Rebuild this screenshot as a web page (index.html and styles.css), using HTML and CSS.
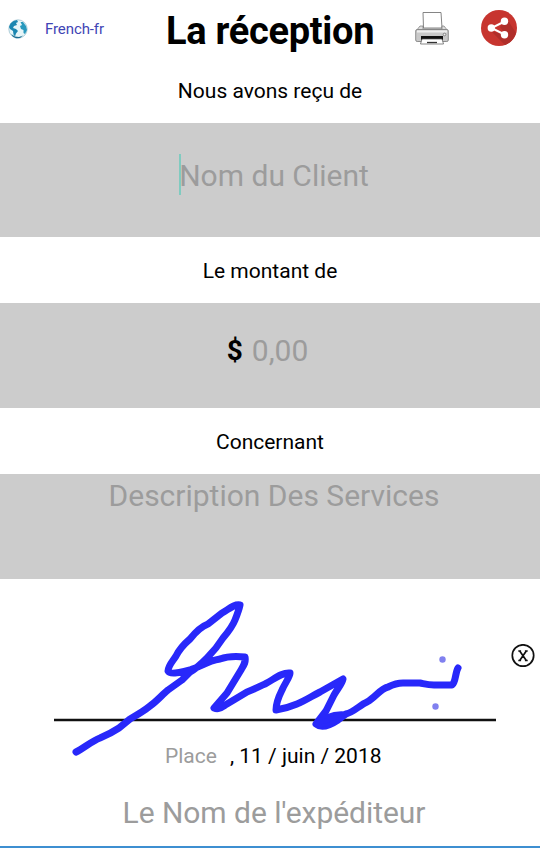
FILE: index.html
```html
<!DOCTYPE html>
<html lang="fr">
<head>
    <meta charset="UTF-8">
    <meta name="viewport" content="width=device-width, initial-scale=1.0">
    <title>La réception</title>
    <link rel="stylesheet" href="styles.css">
</head>
<body>
    <header>
        <div class="language">
            <svg class="globe" viewBox="0 0 20 20">
                <circle cx="10" cy="10" r="9.200" fill="#e6f5f8" stroke="#8fb9c8" stroke-width=".7"/>
                <path fill="#1b86b0" d="M2.500 4.500l3-2.500 3.500-1 1 2-2 1 1 2-3 1-1 2 3 1 2 2-2 2.500-1 3-1.500-2-.5-3.500-3-2-1-2z"/>
                <path fill="#2798bd" d="M12.500 3l2.500 0 3 4 1 4-2 4-1.500-1 0-3-2.500-1-1-3 2-1z"/>
                <path fill="#1b6d92" d="M3 15l4 2.500 4 .5 4-1.500-3 2.500-4 .2-3-1.500z"/>
            </svg>
            <span>French-fr</span>
        </div>
        <h1>La réception</h1>
        <div class="actions">
            <svg class="printer" viewBox="0 0 34 34">
                <path d="M8.500 17L8 1.500h18L27 17z" fill="#fff" stroke="#777" stroke-width=".9"/>
                <path d="M5 15h3v3h19v-3h2l4 5H1z" fill="#ddd" stroke="#777" stroke-width=".7"/>
                <rect x=".7" y="18.500" width="32.600" height="12" rx="1.500" fill="#c9c9c9" stroke="#777" stroke-width=".8"/>
                <path d="M2 19.500h30v2H2z" fill="#eee"/>
                <path d="M6 25h22v4H6z" fill="#111"/>
                <path d="M7 28h20l1.500 5h-23z" fill="#fff" stroke="#555" stroke-width=".7"/>
                <path d="M12 31.500h10" stroke="#333" stroke-width="1.300"/>
                <circle cx="29.500" cy="23.500" r="1.300" fill="#eee" stroke="#555" stroke-width=".6"/>
            </svg>
            <svg class="share" viewBox="0 0 36 36">
                <circle cx="18" cy="18" r="18" fill="#c7352f"/>
                <path d="M10 21l14 14a18 18 0 0 0 11-12L26 9l-7 8 6 8z" fill="#b02e2a"/>
                <path d="M23.500 11.500L10.500 18l13 6.500" fill="none" stroke="#fff" stroke-width="2"/>
                <g fill="#fff">
                    <circle cx="23.500" cy="11.300" r="3.700"/>
                    <circle cx="10.300" cy="18" r="3.700"/>
                    <circle cx="23.500" cy="24.700" r="3.700"/>
                </g>
            </svg>
        </div>
    </header>

    <main>
        <h2 class="label-client">Nous avons reçu de</h2>
        <div class="field field-client"><span class="caret"></span><span>Nom du Client</span></div>

        <h2>Le montant de</h2>
        <div class="field field-amount"><b>$</b><span>0,00</span></div>

        <h2>Concernant</h2>
        <div class="field field-services"><span>Description Des Services</span></div>

        <div class="signature">
            <svg viewBox="0 579 540 180">
                <path d="M54 720H496" stroke="#111" stroke-width="2.300"/>
                <path class="ink" d="M76 752C84 748 92 741 100 738C107 735 113 732 119 728L130 719C137 715 144 711 150 706C156 702 162 695 168 690L182 680L190 672C196 669 201 664 207 658C213 652 218 646 223 638C229 631 233 625 235 620C237 615 239 610 240 605C234 604 229 609 222 613L208 624C200 627 194 634 190 639C183 645 179 650 176 656C172 662 168 666 168 671C170 675 182 672 190 670C200 667 207 661 220 659C228 656 236 656 245 657C246 662 244 665 241 670L227 693L214 708C219 710 222 707 227 704L247 692C255 689 260 686 265 684C273 680 282 672 290 673C290 677 285 683 282 690C279 696 276 704 276 710C282 709 290 707 297 704C305 701 312 696 320 692L343 679C342 684 338 688 334 695L326 711L316 724C322 729 332 724 338 720L346 714C354 712 360 705 367 702C376 697 380 689 388 687C394 684 398 683 403 683H420C425 684 428 685 434 685H452C456 682 455 673 458 668"/>
                <path class="blot" d="M316 724Q328 711 346 713Q336 724 320 726Z"/>
                <circle cx="442.500" cy="659.500" r="3.200" fill="#8080ef"/>
                <circle cx="435.500" cy="706.500" r="3.200" fill="#8080ef"/>
            </svg>
            <svg class="clear" viewBox="0 0 24 24">
                <circle cx="12" cy="11.500" r="10.700"/>
                <path d="M8.700 7l6.600 9.500M15.300 7l-6.600 9.500M7.300 7h2.800M13.900 7h2.800M7.300 16.500h2.800M13.900 16.500h2.800"/>
            </svg>
        </div>
    </main>

    <footer>
        <div class="date"><span class="place">Place</span><span class="day">, 11 / juin / 2018</span></div>
        <div class="sender">Le Nom de l'expéditeur</div>
    </footer>
</body>
</html>
```
FILE: styles.css
```css
* {
    box-sizing: border-box;
}
body {
    display: flex;
    flex-direction: column;
    width: 540px;
    height: 848px;
    margin: 0;
    overflow: hidden;
    font-family: Roboto, Arial, sans-serif;
    background-color: white;
    color: black;
    white-space: nowrap;
}
svg {
    display: block;
}


header {
    display: grid;
    grid-template-columns: 166px 208px 1fr;
    align-items: center;
    height: 58px;
}
.language {
    display: flex;
    align-items: center;
    gap: 17px;
    padding-left: 8px;
    font-size: 15px;
    letter-spacing: -0.1px;
    color: #3f45b5;
}
.globe {
    width: 20px;
    height: 20px;
}
h1 {
    margin: 4px 0 0;
    font-size: 38px;
    font-weight: 700;
    letter-spacing: -0.3px;
}
.actions {
    display: flex;
    align-items: center;
    gap: 32px;
    padding-left: 41px;
    padding-bottom: 2px;
}
.printer {
    width: 34px;
    height: 34px;
}
.share {
    width: 36px;
    height: 36px;
}


h2 {
    height: 66px;
    margin: 0;
    line-height: 69px;
    font-size: 21px;
    font-weight: 400;
    text-align: center;
}
.label-client {
    height: 65px;
    line-height: 67px;
}
.field {
    display: flex;
    justify-content: center;
    height: 105px;
    line-height: 36px;
    font-size: 30px;
    color: #9c9c9c;
    background-color: #ccc;
}
.field-client {
    height: 114px;
    padding: 35px 0 0 8px;
}
.caret {
    width: 2px;
    height: 41px;
    margin: -4px -2px 0 0;
    background-color: #80cbc0;
}
.field-amount {
    gap: 9px;
    padding: 30px 5px 0 0;
}
.field-amount b {
    font-size: 28px;
    font-weight: 700;
    color: black;
}
.field-services {
    padding: 4px 0 0 8px;
}


.signature {
    position: relative;
    height: 161px;
}
.ink {
    fill: none;
    stroke: #2828fa;
    stroke-width: 7;
    stroke-linecap: round;
    stroke-linejoin: round;
}
.blot {
    fill: #2828fa;
    stroke: #2828fa;
    stroke-width: 3;
}
.clear {
    position: absolute;
    top: 65px;
    right: 5px;
    width: 24px;
    height: 24px;
    fill: none;
    stroke: #111;
    stroke-width: 1.7;
}


footer {
    display: flex;
    flex-direction: column;
    flex: 1;
    border-bottom: 2px solid #3d8fd1;
}
.date {
    display: flex;
    gap: 14px;
    padding-left: 165px;
    line-height: 32px;
    font-size: 21px;
}
.day {
    margin-left: -1px;
}
.place, .sender {
    color: #9c9c9c;
}
.sender {
    padding: 23px 0 0 8px;
    line-height: 36px;
    font-size: 30px;
    letter-spacing: -0.05px;
    text-align: center;
}
```
